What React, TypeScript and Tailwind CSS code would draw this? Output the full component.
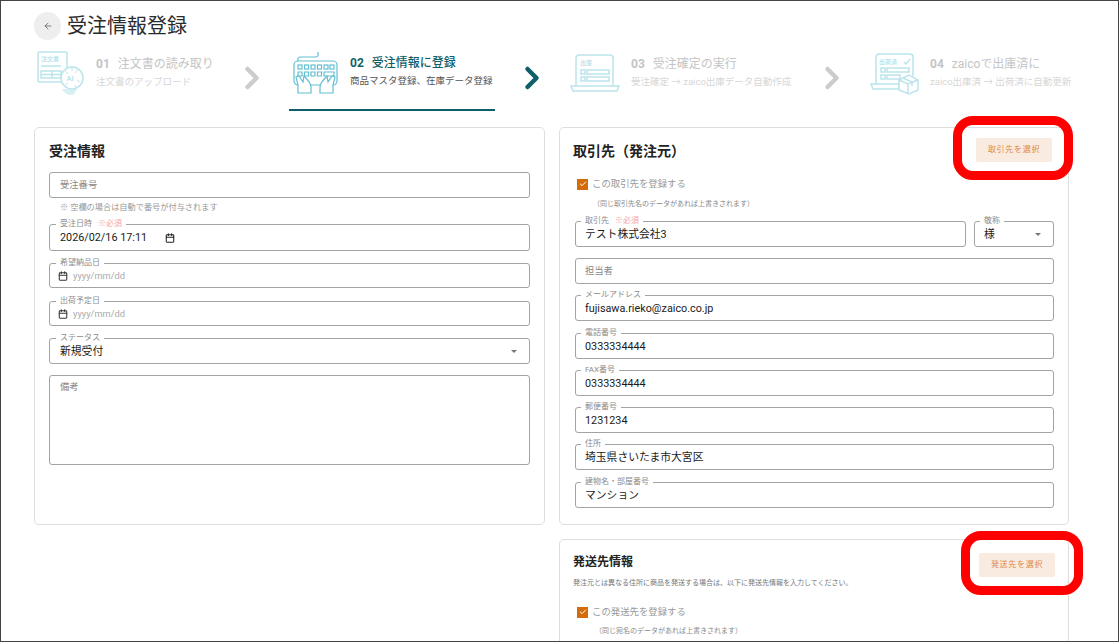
import { ArrowLeft, ChevronRight, Calendar, Check } from "lucide-react";

const font = "font-['Roboto','Noto_Sans_CJK_JP',sans-serif]";

function OrderIcon() {
  return (
    <svg width="48" height="46" viewBox="0 0 48 46" fill="none" stroke="#8fd3df" strokeWidth="1.5">
      <rect x="2" y="1" width="29" height="30" rx="2" />
      <text x="5" y="10" fontSize="6" fill="#8fd3df" stroke="none" fontWeight="700">注文書</text>
      <path d="M5 15h20M5 20h20v7H5zM5 23.500h20M16 20v7" />
      <path d="M26 38c2 3 5 6 9 6s4-3 6-6z" fill="#bfe6ec" stroke="none" />
      <circle cx="36" cy="27" r="11" fill="#fff" />
      <text x="30.500" y="30" fontSize="7.500" fill="#8fd3df" stroke="none" fontWeight="700">AI</text>
      <path d="M29 20l3 3M42 19l-3 3M44 31l-3-2M36 16v4M29 34l3-2M40 37l-1-3" strokeWidth="1" />
    </svg>
  );
}

function KeyboardIcon() {
  return (
    <svg width="46" height="44" viewBox="0 0 46 44" fill="none" stroke="#62c0d2" strokeWidth="1.200">
      <path d="M25 1v3a2 2 0 0 1-2 2H7a2 2 0 0 0-2 2v2" />
      <rect x="1" y="10" width="43" height="24" rx="4" />
      {[5, 11.500, 18, 24.500, 31, 37].map((x) => (
        <rect key={x} x={x} y="14" width="4" height="4" />
      ))}
      <path d="M5 21h4v4H5zM11.500 21h4v4h-4zM18 21h4v4h-4zM24.500 21h4v4h-4zM31 21h10v4H31z" />
      <path fill="#fff" d="M5 42v-8l-2-8 3-1 4 6 1-6c3 3 7 8 7 11v6zM40 42v-8l2-8-3-1-4 6-1-6c-3 3-7 8-7 11v6z" />
    </svg>
  );
}

function ShipIcon() {
  return (
    <svg width="50" height="40" viewBox="0 0 50 40" fill="none" stroke="#8fd3df" strokeWidth="1.500">
      <path d="M6 32V4a3 3 0 0 1 3-3h31a3 3 0 0 1 3 3v28" />
      <path d="M1 32h48l-2 5H3z" />
      <text x="10" y="11" fontSize="6" fill="#8fd3df" stroke="none" fontWeight="700">出庫</text>
      <path d="M11 16h4v4h-4zM11 23h4v4h-4zM17 16h22v4H17zM17 23h22v4H17z" />
    </svg>
  );
}

function DoneIcon() {
  return (
    <svg width="50" height="42" viewBox="0 0 50 42" fill="none" stroke="#8fd3df" strokeWidth="1.500">
      <path d="M6 31V4a3 3 0 0 1 3-3h31a3 3 0 0 1 3 3v19" />
      <path d="M1 31h28v5H3z" />
      <text x="9" y="11" fontSize="6" fill="#8fd3df" stroke="none" fontWeight="700">出荷済</text>
      <path d="M34 9l2 2 4-5M11 15h4v4h-4zM11 22h4v4h-4zM17 15h22v4H17zM17 22h13v4H17z" />
      <path fill="#fff" d="M29 27l10-5 9 5v10l-9 4-10-4z" />
      <path d="M29 27l9 4 10-4M38 31v10M33 25l9 4v4" />
    </svg>
  );
}

function Step({
  no,
  title,
  sub,
  icon,
  active,
  className,
}: {
  no: string;
  title: string;
  sub: string;
  icon: React.ReactNode;
  active?: boolean;
  className: string;
}) {
  return (
    <div className={`flex h-[60px] items-center pb-[16px] ${className}`}>
      <div className={`translate-y-[2px] ${active ? "" : "opacity-60"}`}>{icon}</div>
      <div className="whitespace-nowrap">
        <div className={`flex gap-[8px] text-[12px] leading-[18px] ${active ? "font-bold text-[#0f5f6b]" : "text-[#c4c4c4]"}`}>
          <span className="font-bold">{no}</span>
          <span className={active ? "font-medium" : ""}>{title}</span>
        </div>
        <div className={`mt-[2px] text-[9.500px] leading-[14px] ${active ? "text-[#555]" : "text-[#d6d6d6]"}`}>{sub}</div>
      </div>
    </div>
  );
}

function Field({
  label,
  required,
  value,
  placeholder,
  height = "h-[26px]",
  className = "",
  dropdown,
  calendar,
  picker,
  multiline,
  dense,
}: {
  label?: string;
  required?: boolean;
  value?: string;
  placeholder?: string;
  height?: string;
  className?: string;
  dropdown?: boolean;
  calendar?: boolean;
  picker?: boolean;
  multiline?: boolean;
  dense?: boolean;
}) {
  return (
    <div className={`relative flex rounded-[3px] border border-[#a3a3a3] bg-white pr-[10px] ${dense ? "pl-[9px]" : "pl-[10px]"} ${multiline ? "items-start pt-[4px]" : "items-center"} ${height} ${className}`}>
      {label && (
        <span className={`absolute top-[-6px] flex gap-[6px] bg-white px-[4px] text-[8px] leading-[10px] text-[#8c8c8c] ${dense ? "left-[5px]" : "left-[6px]"}`}>
          {label}
          {required && <span className="text-[#f7a3a3]">※必須</span>}
        </span>
      )}
      {calendar && <Calendar size={10} strokeWidth={2.5} className="mr-[5px] ml-[-2px] text-[#333]" />}
      {value && <span className="translate-y-[1px] text-[10.800px] text-[#1a1a1a]">{value}</span>}
      {picker && <Calendar size={10} strokeWidth={2.5} className="ml-[18px] text-[#222]" />}
      {placeholder && (
        <span className={`text-[9.300px] ${calendar ? "text-[#aaa]" : "text-[#888]"}`}>{placeholder}</span>
      )}
      {dropdown && (
        <span className="mr-[2px] ml-auto h-0 w-0 border-x-[3.500px] border-t-[3.500px] border-x-transparent border-t-[#777]" />
      )}
    </div>
  );
}

function CheckRow({ label, note, noteClass }: { label: string; note: string; noteClass: string }) {
  return (
    <>
      <div className="flex items-center gap-[4px] pl-[2px]">
        <span className="flex h-[11px] w-[11px] items-center justify-center bg-[#d46c0b]">
          <Check size={8} strokeWidth={3} className="text-white" />
        </span>
        <span className="text-[9.400px] leading-[14px] text-[#9a9a9a]">{label}</span>
      </div>
      <p className={`text-[7px] leading-[10px] text-[#888] ${noteClass}`}>{note}</p>
    </>
  );
}

function PickButton({ label, className }: { label: string; className: string }) {
  return (
    <button className={`flex h-[24px] items-center justify-center rounded-[2px] bg-[#f9ebe0] text-[8px] tracking-[0.7px] text-[#dd8a45] ${className}`}>
      {label}
    </button>
  );
}

function Callout({ className }: { className: string }) {
  return <div className={`pointer-events-none absolute rounded-[20px] border-[9px] border-[#ff0000] ${className}`} />;
}

export default function App() {
  return (
    <div className={`relative h-[642px] overflow-hidden border border-[#444] bg-white ${font}`}>
      {/* header */}
      <div className="flex h-[48px] items-center pt-[2px] pl-[33px]">
        <span className="flex h-[28px] w-[27px] items-center justify-center rounded-full bg-[#eeeeee]">
          <ArrowLeft size={10} className="text-[#666]" />
        </span>
        <h1 className="ml-[6px] text-[20px] leading-[28px] text-[#2b2b2b]">受注情報登録</h1>
      </div>

      {/* stepper */}
      <div className="flex h-[62px] items-center pl-[35px]">
        <Step
          no="01"
          title="注文書の読み取り"
          sub="注文書のアップロード"
          icon={<OrderIcon />}
          className="w-[198px] gap-[12px]"
        />
        <ChevronRight size={36} strokeWidth={3} className="mb-[4px] shrink-0 text-[#cccccc]" />
        <div className="ml-[19px] h-[62px] w-[206px] shrink-0 self-start border-b-2 border-[#0f5f6b] pl-[4px]">
          <Step
            no="02"
            title="受注情報に登録"
            sub="商品マスタ登録、在庫データ登録"
            icon={<KeyboardIcon />}
            active
            className="gap-[11px]"
          />
        </div>
        <ChevronRight size={36} strokeWidth={3} className="mb-[4px] ml-[19px] shrink-0 text-[#0f5f6b]" />
        <Step
          no="03"
          title="受注確定の実行"
          sub="受注確定 → zaico出庫データ自動作成"
          icon={<ShipIcon />}
          className="ml-[20px] w-[244px] shrink-0 gap-[11px]"
        />
        <ChevronRight size={36} strokeWidth={3} className="mb-[4px] shrink-0 text-[#cccccc]" />
        <Step
          no="04"
          title="zaicoで出庫済に"
          sub="zaico出庫済 → 出荷済に自動更新"
          icon={<DoneIcon />}
          className="ml-[20px] shrink-0 gap-[10px]"
        />
      </div>

      {/* cards */}
      <div className="mt-[16px] flex items-start gap-[14px] pl-[33px]">
        <section className="h-[398px] w-[511px] shrink-0 rounded-[5px] border border-[#dedede] px-[14px]">
          <h2 className="mt-[13px] text-[14px] leading-[20px] font-bold text-[#222]">受注情報</h2>
          <Field placeholder="受注番号" className="mt-[11px]" />
          <p className="mt-[4px] pl-[11px] text-[8.200px] leading-[10px] text-[#999]">※ 空欄の場合は自動で番号が付与されます</p>
          <Field label="受注日時" required value="2026/02/16 17:11" picker height="h-[27px]" className="mt-[12px]" />
          <Field label="希望納品日" calendar placeholder="yyyy/mm/dd" height="h-[25px]" className="mt-[12px]" />
          <Field label="出荷予定日" calendar placeholder="yyyy/mm/dd" height="h-[25px]" className="mt-[13px]" />
          <Field label="ステータス" value="新規受付" dropdown className="mt-[12px]" />
          <Field placeholder="備考" multiline height="h-[90px]" className="mt-[11px]" />
        </section>

        <div className="w-[510px] shrink-0">
          <section className="relative h-[398px] rounded-[5px] border border-[#dedede] pr-[14px] pl-[15px]">
            <h2 className="mt-[13px] ml-[-2px] text-[14px] leading-[20px] font-bold text-[#222]">取引先（発注元）</h2>
            <PickButton label="取引先を選択" className="absolute top-[10px] right-[16px] w-[76px]" />
            <div className="mt-[16px]">
              <CheckRow label="この取引先を登録する" note="（同じ取引先名のデータがあれば上書きされます）" noteClass="mt-[8px] pl-[18px]" />
            </div>
            <div className="mt-[12px] flex gap-[8px]">
              <Field dense label="取引先" required value="テスト株式会社3" className="flex-1" />
              <Field dense label="敬称" value="様" dropdown className="w-[80px]" />
            </div>
            <div className="mt-[11px] flex flex-col gap-[11.300px]">
              <Field dense placeholder="担当者" />
              <Field dense label="メールアドレス" value="fujisawa.rieko@zaico.co.jp" />
              <Field dense label="電話番号" value="0333334444" />
              <Field dense label="FAX番号" value="0333334444" />
              <Field dense label="郵便番号" value="1231234" />
              <Field dense label="住所" value="埼玉県さいたま市大宮区" />
              <Field dense label="建物名・部屋番号" value="マンション" />
            </div>
          </section>

          <section className="relative mt-[14px] h-[120px] rounded-t-[5px] border border-[#dedede] pl-[13px]">
            <h2 className="mt-[12px] text-[12px] leading-[20px] font-bold text-[#222]">発送先情報</h2>
            <PickButton label="発送先を選択" className="absolute top-[13px] right-[13px] w-[76px]" />
            <p className="mt-[6px] text-[7px] leading-[10px] text-[#777]">
              発注元とは異なる住所に商品を発送する場合は、以下に発送先情報を入力してください。
            </p>
            <div className="mt-[17px] pl-[2px]">
              <CheckRow label="この発送先を登録する" note="（同じ宛名のデータがあれば上書きされます）" noteClass="mt-[7px] pl-[20px]" />
            </div>
          </section>
        </div>
      </div>

      <Callout className="top-[115px] left-[952px] h-[64px] w-[120px]" />
      <Callout className="top-[530px] left-[960px] h-[64px] w-[122px]" />
    </div>
  );
}
